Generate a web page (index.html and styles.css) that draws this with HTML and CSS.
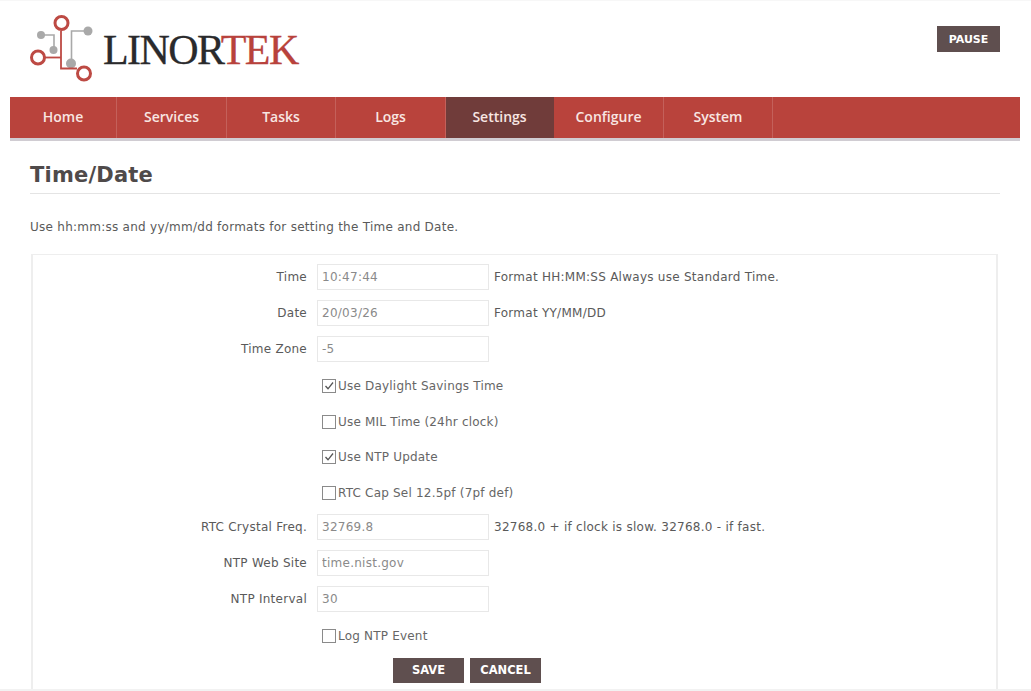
FILE: index.html
```html
<!DOCTYPE html>
<html lang="en">
<head>
<meta charset="utf-8">
<title>Time/Date</title>
<link rel="stylesheet" href="styles.css">
</head>
<body>
<header class="top">
  <div class="logo">
    <svg class="mark" width="74" height="72" viewBox="28 10 74 72" aria-hidden="true">
      <g fill="none" stroke="#a9a9a9" stroke-width="1.6">
        <path d="M41 35H54V50"/>
        <path d="M88 31H71.500V63"/>
      </g>
      <g fill="#a9a9a9">
        <circle cx="41" cy="35" r="4"/>
        <circle cx="53.500" cy="50" r="4"/>
        <circle cx="88" cy="31" r="4.500"/>
        <circle cx="71" cy="63.500" r="5"/>
      </g>
      <g fill="none" stroke="#bd4a44" stroke-width="1.800">
        <path d="M61 31V68.500H77"/>
        <path d="M45 57.500H61"/>
      </g>
      <g fill="#fff" stroke="#bd4a44" stroke-width="3">
        <circle cx="61.500" cy="23" r="6.500"/>
        <circle cx="38" cy="57.500" r="6.500"/>
        <circle cx="84" cy="73.500" r="6.500"/>
      </g>
    </svg>
    <span class="brand">LINOR<span class="brand-red">TEK</span></span>
  </div>
  <a class="btn btn-pause" href="#">PAUSE</a>
</header>
<nav class="nav">
  <a class="nav-item w-home" href="#">Home</a>
  <a class="nav-item w-services" href="#">Services</a>
  <a class="nav-item w-tasks" href="#">Tasks</a>
  <a class="nav-item w-logs" href="#">Logs</a>
  <a class="nav-item w-settings is-active" href="#">Settings</a>
  <a class="nav-item w-configure" href="#">Configure</a>
  <a class="nav-item w-system" href="#">System</a>
</nav>
<main class="content">
  <h1 class="title">Time/Date</h1>
  <p class="intro">Use hh:mm:ss and yy/mm/dd formats for setting the Time and Date.</p>
  <form class="panel">
    <div class="row"><label class="lbl">Time</label><input class="field" value="10:47:44"><span class="help">Format HH:MM:SS Always use Standard Time.</span></div>
    <div class="row"><label class="lbl">Date</label><input class="field" value="20/03/26"><span class="help">Format YY/MM/DD</span></div>
    <div class="row row-before-checks"><label class="lbl">Time Zone</label><input class="field" value="-5"></div>
    <div class="check-row"><span class="box"><svg width="12" height="12" viewBox="0 0 12 12"><path d="M2.500 6L5 8.800L10 2.500" fill="none" stroke="#555" stroke-width="1.300"/></svg></span><span class="check-text">Use Daylight Savings Time</span></div>
    <div class="check-row"><span class="box"></span><span class="check-text">Use MIL Time (24hr clock)</span></div>
    <div class="check-row"><span class="box"><svg width="12" height="12" viewBox="0 0 12 12"><path d="M2.500 6L5 8.800L10 2.500" fill="none" stroke="#555" stroke-width="1.300"/></svg></span><span class="check-text">Use NTP Update</span></div>
    <div class="check-row check-last"><span class="box"></span><span class="check-text">RTC Cap Sel 12.5pf (7pf def)</span></div>
    <div class="row"><label class="lbl">RTC Crystal Freq.</label><input class="field" value="32769.8"><span class="help">32768.0 + if clock is slow. 32768.0 - if fast.</span></div>
    <div class="row"><label class="lbl">NTP Web Site</label><input class="field" value="time.nist.gov"></div>
    <div class="row"><label class="lbl">NTP Interval</label><input class="field" value="30"></div>
    <div class="check-row check-log"><span class="box"></span><span class="check-text">Log NTP Event</span></div>
    <div class="actions">
      <a class="btn btn-form" href="#">SAVE</a>
      <a class="btn btn-form" href="#">CANCEL</a>
    </div>
  </form>
</main>
<footer class="band"></footer>
</body>
</html>
```
FILE: styles.css
```css
* { box-sizing: border-box; }
html, body { height: 100%; }
body {
  margin: 0;
  background: #fff;
  overflow: hidden;
  display: flex;
  flex-direction: column;
  font-family: "DejaVu Sans", sans-serif;
  font-size: 12px;
  letter-spacing: 0.26px;
  color: #5a5a5a;
}
a { text-decoration: none; }

.top {
  height: 97px;
  flex: none;
  padding: 25px 31px 0 28px;
  border-top: 1px solid #f7f7f7;
  display: flex;
  justify-content: space-between;
  align-items: flex-start;
}
.logo {
  display: flex;
  align-items: flex-start;
  margin-top: -16px;
}
.mark { display: block; flex: none; }
.brand {
  margin: 4px 0 0 1px;
  font-family: "Liberation Serif", serif;
  font-size: 42px;
  line-height: 72px;
  letter-spacing: -1.6px;
  color: #2a2a2c;
  -webkit-text-stroke: 0.3px currentColor;
}
.brand-red { color: #b8423c; }

.btn {
  display: flex;
  align-items: center;
  justify-content: center;
  background: #5f4f4f;
  color: #fff;
  font-weight: 700;
  letter-spacing: 0;
}
.btn-pause {
  width: 63px;
  height: 26px;
  font-size: 11px;
}

.nav {
  display: flex;
  flex: none;
  height: 44px;
  margin: 0 11px 0 10px;
  background: #b9433c;
  border-bottom: 3px solid #d0ccd2;
  letter-spacing: 0;
}
.nav-item {
  display: flex;
  align-items: center;
  justify-content: center;
  padding-bottom: 3px;
  border-right: 1px solid #c4605a;
  color: #f8e6e2;
  font-family: "Open Sans", sans-serif;
  font-weight: 600;
  font-size: 14px;
}
.w-home { width: 107px; }
.w-services { width: 110px; }
.w-tasks { width: 109px; }
.w-logs { width: 110px; }
.w-settings { width: 108px; }
.w-configure { width: 110px; }
.w-system { width: 109px; }
.is-active { background: #703c3a; border-right-color: #703c3a; }

.content {
  flex: 1;
  min-height: 0;
  display: flex;
  flex-direction: column;
  padding: 0 31px 0 30px;
}
.title {
  margin: 22px 0 0;
  padding-bottom: 5px;
  border-bottom: 1px solid #e4e4e4;
  font-size: 21px;
  line-height: 25px;
  font-weight: 700;
  letter-spacing: 0.2px;
  color: #4f4a4a;
}
.intro {
  margin: 25px 0 0;
  line-height: 16px;
  color: #5a5a5a;
}
.panel {
  flex: 1;
  margin: 19px 2px 0 1px;
  padding: 9px 0 0;
  border: 2px solid #eeeeee;
  border-width: 1px 2px 0;
}
.row {
  display: flex;
  align-items: center;
  height: 26px;
  margin-bottom: 10px;
}
.row-before-checks { margin-bottom: 15px; }
.lbl {
  width: 284px;
  padding-right: 10px;
  text-align: right;
  flex: none;
}
.field {
  width: 172px;
  height: 26px;
  padding: 0 4px;
  flex: none;
  border: 1.5px solid #e8e8e8;
  background: #fff;
  font: inherit;
  letter-spacing: inherit;
  color: #8a8a8a;
  outline: 0;
}
.help { margin-left: 5px; }

.check-row {
  display: flex;
  align-items: center;
  height: 18px;
  margin: 0 0 17.670px 289px;
  color: #666;
  letter-spacing: 0.2px;
}
.check-last { margin-bottom: 12px; }
.check-log { margin: 15px 0 13px 289px; }
.box {
  width: 14px;
  height: 14px;
  margin-right: 2px;
  flex: none;
  border: 1px solid #8a8a8a;
  display: flex;
  align-items: center;
  justify-content: center;
}
.box svg { display: block; flex: none; }

.actions {
  display: flex;
  gap: 6px;
  margin-left: 360px;
}
.btn-form {
  width: 71px;
  height: 25px;
  font-size: 11.500px;
}

.band {
  height: 2px;
  flex: none;
  background: #f2f2f2;
}
```
